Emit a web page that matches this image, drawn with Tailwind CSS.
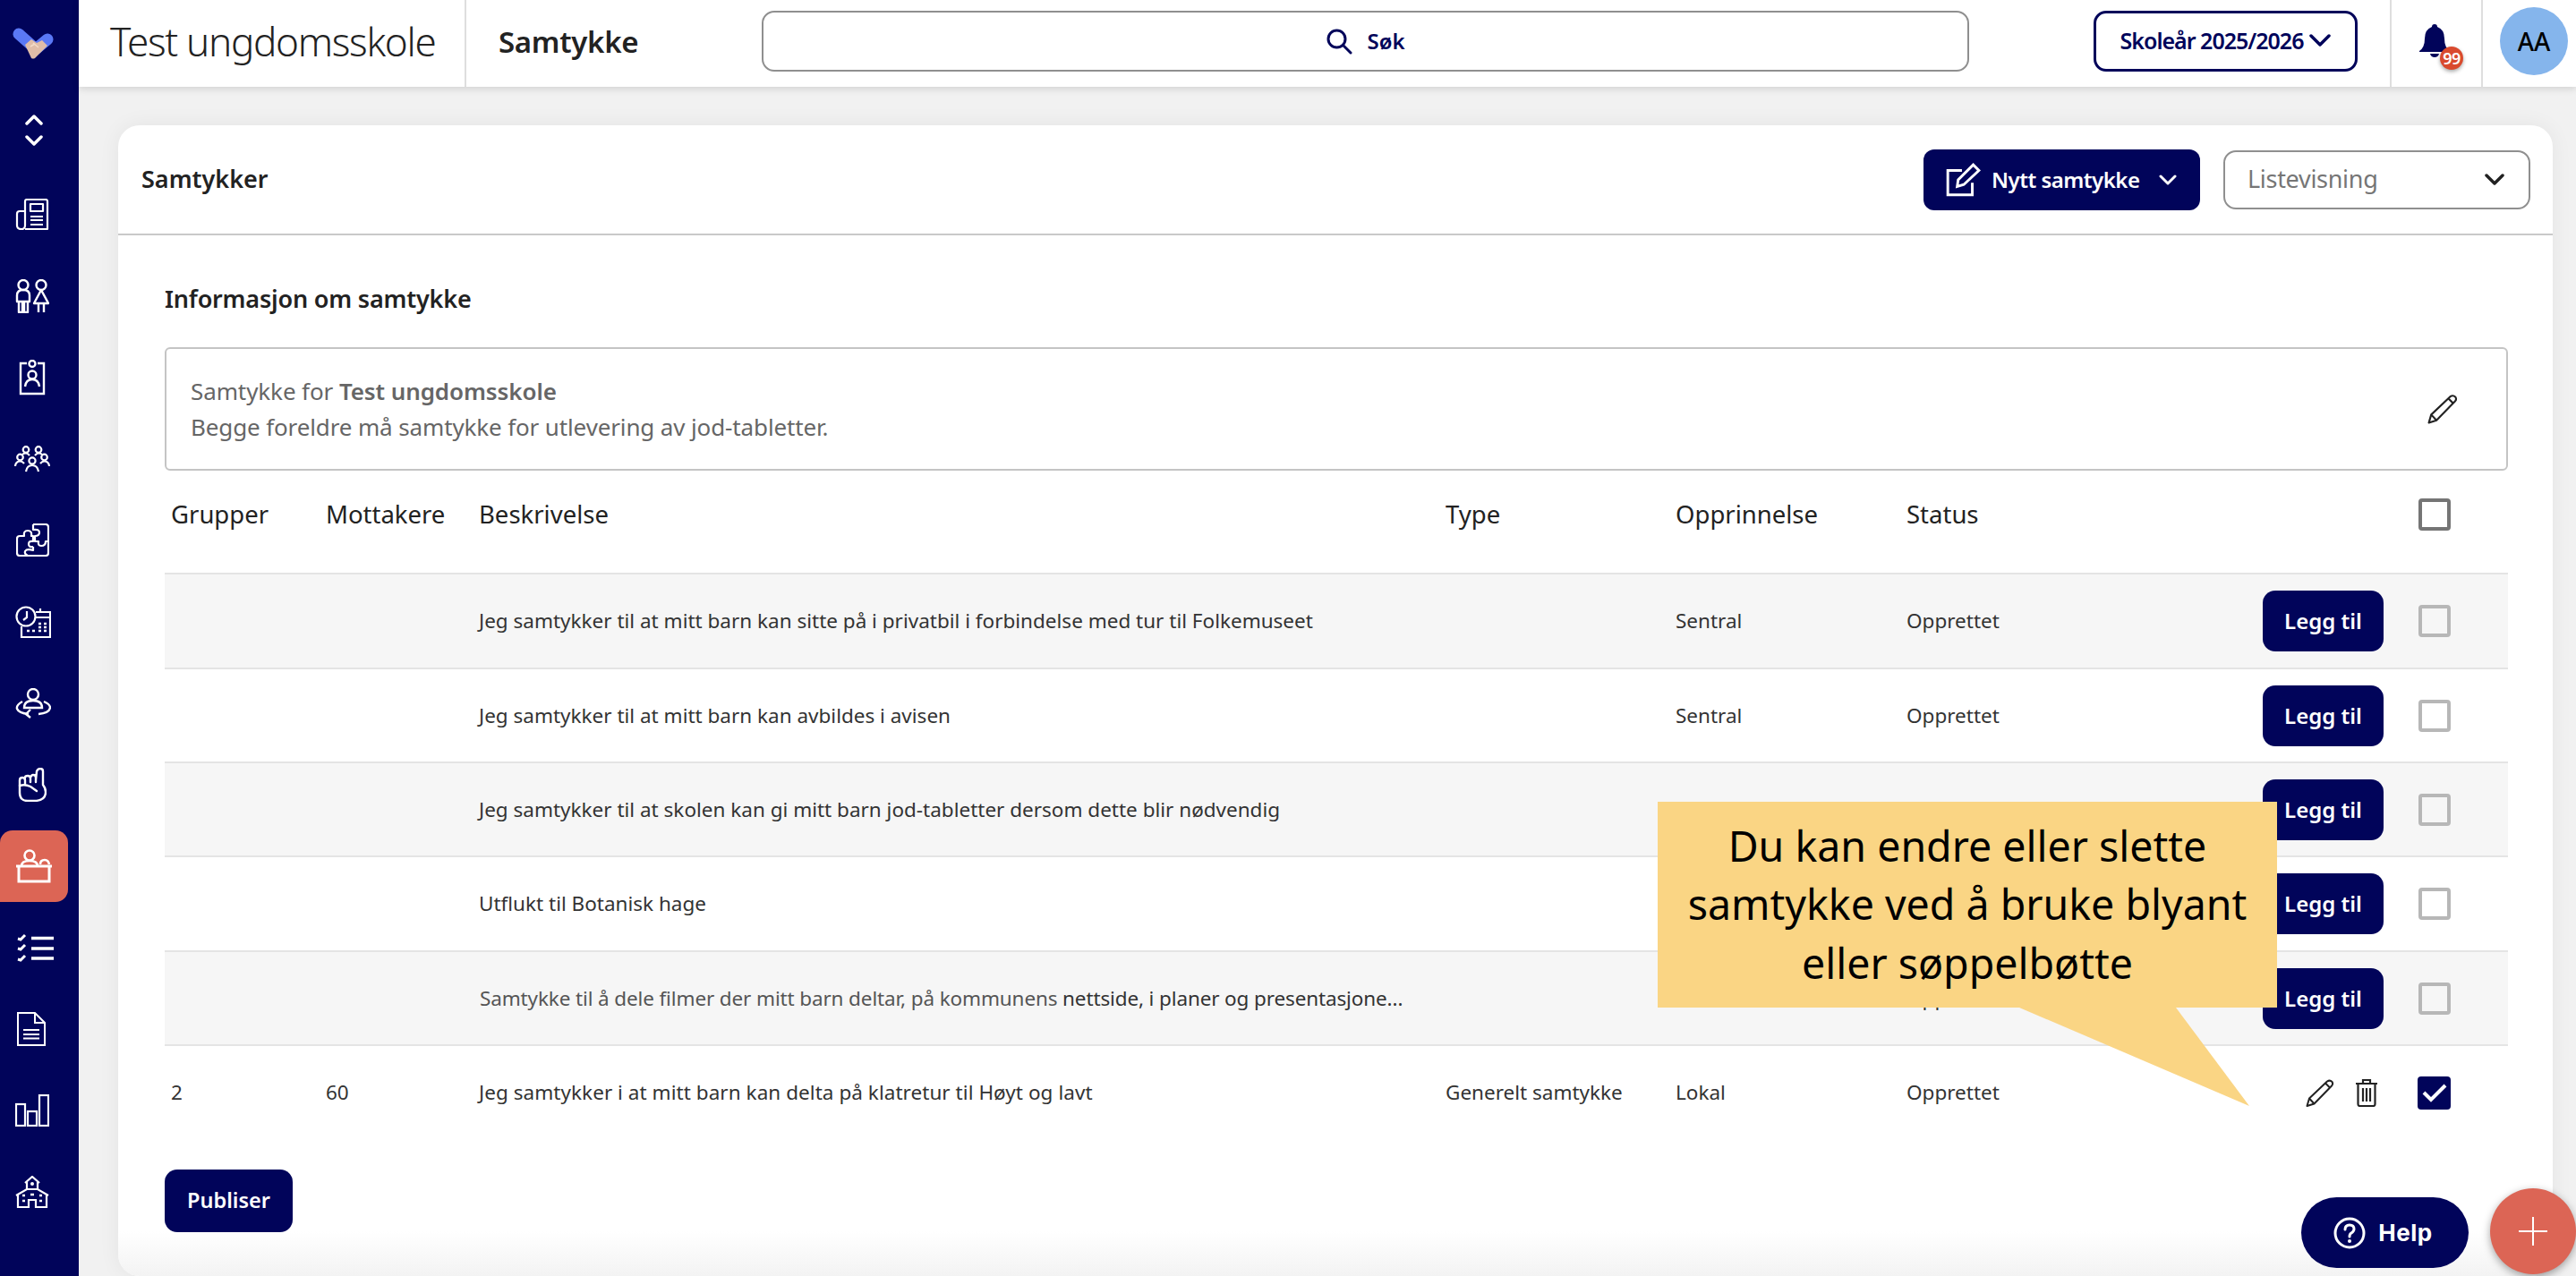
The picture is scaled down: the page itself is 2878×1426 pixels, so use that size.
<!DOCTYPE html>
<html lang="en">
<head>
  <meta charset="UTF-8">
  <title>Samtykke</title>
  <script src="https://cdn.jsdelivr.net/npm/@tailwindcss/browser@4"></script>
</head>
<body class="bg-[#f1f1f1] font-['Noto_Sans',sans-serif] text-[#222]">
<div class="relative flex h-[1426px] w-[2878px] overflow-hidden">

  <!-- Sidebar -->
  <aside class="w-[88px] shrink-0 bg-[#01045a] flex flex-col text-white">
    <div class="h-[97px] flex items-center pl-[14px]">
      <svg width="46" height="36" viewBox="0 0 46 36">
        <path d="M7 7 L25 23" stroke="#5a78f5" stroke-width="13" stroke-linecap="round"/>
        <path d="M39 13 L27 23" stroke="#5a78f5" stroke-width="13" stroke-linecap="round"/>
        <path d="M14 19 L21 13 L27 17 L33 14 L39 20 L25 34 Q23 35 21 34 Z" fill="#e0bda8"/>
        <path d="M23 17 L29 22 M20 21 L25 18" stroke="#f3dcc8" stroke-width="1.5" fill="none"/>
      </svg>
    </div>
    <div class="h-[97px] flex flex-col items-center justify-center gap-[11px] pr-[12px]">
      <svg width="20" height="13" viewBox="0 0 20 13" fill="none" stroke="#fff" stroke-width="3.5" stroke-linecap="round" stroke-linejoin="round"><path d="M2 11 L10 3 L18 11"/></svg>
      <svg width="20" height="13" viewBox="0 0 20 13" fill="none" stroke="#fff" stroke-width="3.5" stroke-linecap="round" stroke-linejoin="round"><path d="M2 2 L10 10 L18 2"/></svg>
    </div>
    <!-- news -->
    <div class="h-[91px] flex items-center justify-center pr-[16px]">
      <svg width="38" height="36" viewBox="0 0 38 36" fill="none" stroke="#fff" stroke-width="2.2" stroke-linejoin="round"><path d="M11 34 H36 V3 Q36 1 34 1 H13 Q11 1 11 3 V30 Q11 34 7 34 Q2 34 2 30 V17 Q2 14 5 14 H11"/><rect x="17" y="6" width="14" height="8"/><path d="M17 20 H31 M17 24 H31 M17 29 H31"/></svg>
    </div>
    <!-- people -->
    <div class="h-[91px] flex items-center justify-center pr-[16px]">
      <svg width="38" height="38" viewBox="0 0 38 38" fill="none" stroke="#fff" stroke-width="2.4" stroke-linejoin="round"><circle cx="9" cy="6.5" r="5.500"/><circle cx="29" cy="6.5" r="5.500"/><path d="M2 25 V18 Q2 12 9 12 Q16 12 16 18 V25 Z M4 25 V37 H8 V25 M10 25 V37 H14 V25"/><path d="M29 12 L37 27 H21 Z M26 27 V37 M32 27 V37"/></svg>
    </div>
    <!-- clipboard -->
    <div class="h-[91px] flex items-center justify-center pr-[16px]">
      <svg width="30" height="40" viewBox="0 0 30 40" fill="none" stroke="#fff" stroke-width="2.4"><path d="M9 4 H2 V38 H28 V4 H21"/><circle cx="15" cy="4.5" r="3.5"/><circle cx="15" cy="17" r="4.5"/><path d="M7 30 Q8 22 15 22 Q22 22 23 30"/></svg>
    </div>
    <!-- group -->
    <div class="h-[91px] flex items-center justify-center pr-[16px]">
      <svg width="40" height="30" viewBox="0 0 40 30" fill="none" stroke="#fff" stroke-width="2.2"><circle cx="13" cy="4.5" r="3.3"/><circle cx="27" cy="4.5" r="3.3"/><circle cx="6.5" cy="13" r="3.3"/><circle cx="33.5" cy="13" r="3.3"/><circle cx="20" cy="17" r="3.6"/><path d="M1 23 Q1.500 17.500 6.500 17.500 Q9 17.500 11 20 M39 23 Q38.500 17.500 33.500 17.500 Q31 17.500 29 20 M13 29 Q14 22 20 22 Q26 22 27 29 M9 10 Q10 8.500 13 8.500 Q15 8.500 17 11 M31 10 Q30 8.500 27 8.500 Q25 8.500 23 11"/></svg>
    </div>
    <!-- puzzle -->
    <div class="h-[91px] flex items-center justify-center pr-[16px]">
      <svg width="37" height="37" viewBox="0 0 37 37" fill="none" stroke="#fff" stroke-width="2.2" stroke-linejoin="round"><path d="M19 1 H33 Q36 1 36 4 V33 Q36 36 33 36 H4 Q1 36 1 33 V17 Q1 14 4 14 H9 Q8 8 13 8 Q18 8 17 14 H19 V20 Q14 19 14 23 Q14 27 19 26"/><path d="M19 1 V7 Q26 6 26 10 Q26 14 21 14 V20 H25 Q24 25 28 25 Q33 25 33 20 H36"/><path d="M19 26 V30 Q12 28 10 31 Q9 34 13 36"/></svg>
    </div>
    <!-- calendar clock -->
    <div class="h-[91px] flex items-center justify-center pr-[14px]">
      <svg width="40" height="36" viewBox="0 0 40 36" fill="none" stroke="#fff" stroke-width="2.2"><circle cx="12" cy="12" r="10.500"/><path d="M13 6 V13 L9 16"/><path d="M23 7 H39 V35 H7 V23"/><path d="M28 3 V8"/><path d="M22 13 H39" stroke-width="2"/><path d="M26 20 h3 M32 20 h3 M13 28 h3 M19 28 h3 M26 28 h3 M32 28 h3 M26 24 h3 M32 24 h3" stroke-width="2.400"/></svg>
    </div>
    <!-- person rotate -->
    <div class="h-[91px] flex items-center justify-center pr-[14px]">
      <svg width="40" height="34" viewBox="0 0 40 34" fill="none" stroke="#fff" stroke-width="2.4"><circle cx="20" cy="7" r="6"/><path d="M10 22 Q10 14 20 14 Q30 14 30 22 Z"/><path d="M8 15 Q1 19 2 23 Q4 28 15 29 M26 29 Q38 28 39 22 Q39 18 32 15"/><path d="M17 24 L12 29 L17 33" stroke-linejoin="round"/></svg>
    </div>
    <!-- hand -->
    <div class="h-[91px] flex items-center justify-center pr-[16px]">
      <svg width="32" height="38" viewBox="0 0 32 38" fill="none" stroke="#fff" stroke-width="2.4" stroke-linecap="round" stroke-linejoin="round"><path d="M20 14 L21 4 Q22 1 25 1 Q28 1 28 4 V19 Q31 23 31 27 Q31 37 18 37 H11 Q2 37 2 28 V14 Q2 11 5 11 Q8 11 8 14 V18 M8 11 Q8 9 11 9 Q14 9 14 12 V16 M14 11 Q15 8 17 8 Q20 8 20 11 V16"/><path d="M2 20 Q8 18 14 21 L21 26"/></svg>
    </div>
    <!-- active item -->
    <div class="h-[91px] flex items-center">
      <div class="h-[80px] w-[76px] bg-[#dc6555] rounded-r-[14px] rounded-tl-[14px] flex items-center justify-center">
        <svg width="40" height="38" viewBox="0 0 40 38" fill="none" stroke="#fff" stroke-width="2.600"><circle cx="15" cy="7" r="5.500"/><path d="M6 19 Q6 13 15 13 Q24 13 24 19"/><path d="M27 17 Q27 12 32 12 Q36 12 37 17"/><path d="M0 19 H40 M3 19 V36 H37 V19" stroke-width="3"/></svg>
      </div>
    </div>
    <!-- list -->
    <div class="h-[91px] flex items-center justify-center pr-[8px]">
      <svg width="42" height="32" viewBox="0 0 42 32" fill="none" stroke="#fff" stroke-width="3.600"><path d="M16 5.500 H41 M16 17 H41 M16 28 H41"/><path d="M1 6 L4 7 L9 2 M1 17 L4 18 L9 13 M1 29 L4 30 L9 25" stroke-width="3"/></svg>
    </div>
    <!-- document -->
    <div class="h-[91px] flex items-center justify-center pr-[18px]">
      <svg width="32" height="38" viewBox="0 0 32 38" fill="none" stroke="#fff" stroke-width="2"><path d="M1 1 H20 L31 12 V37 H1 Z M20 1 V12 H31"/><path d="M7 20 H25 M7 25 H25 M7 29.500 H25" stroke-width="2.200"/></svg>
    </div>
    <!-- bars -->
    <div class="h-[91px] flex items-center justify-center pr-[16px]">
      <svg width="38" height="36" viewBox="0 0 38 36" fill="none" stroke="#fff" stroke-width="2.200"><rect x="1" y="11" width="10" height="24"/><rect x="14" y="19" width="10" height="16"/><rect x="27" y="1" width="10" height="34"/></svg>
    </div>
    <!-- school -->
    <div class="h-[91px] flex items-center justify-center pr-[16px]">
      <svg width="38" height="36" viewBox="0 0 38 36" fill="none" stroke="#fff" stroke-width="2.200"><path d="M11 8 L19 1 L27 8 M13 7 V15 M25 7 V15"/><path d="M1 22 L13 15 H25 L37 22"/><path d="M3 21 V35 H15 V27 H23 V35 H35 V21"/><circle cx="19" cy="9" r="2" fill="#fff" stroke="none"/><path d="M8 22 h3 M8 28 h3 M17 21 h4 M27 22 h3 M27 28 h3" stroke-width="2.600"/></svg>
    </div>
  </aside>

  <div class="flex-1 flex flex-col min-w-0">
    <!-- Header -->
    <header class="relative z-10 h-[97px] shrink-0 bg-white shadow-[0_2px_8px_rgba(0,0,0,0.14)] flex items-center">
      <div class="w-[433px] h-full flex items-center pl-[35px] pb-[5px] border-r-2 border-[#dedede]">
        <h1 class="text-[44px] font-light text-[#222] whitespace-nowrap tracking-[-1.3px]">Test ungdomsskole</h1>
      </div>
      <div class="w-[330px] pl-[36px] pb-[4px]">
        <span class="text-[33px] font-semibold whitespace-nowrap tracking-[-0.3px]">Samtykke</span>
      </div>
      <div class="w-[1349px] h-[68px] mb-[6px] border-2 border-[#8f8f8f] rounded-[14px] flex items-center justify-center gap-[16px] text-[#01045a]">
        <svg width="30" height="30" viewBox="0 0 30 30" fill="none" stroke="#01045a" stroke-width="3" stroke-linecap="round"><circle cx="12.500" cy="12.500" r="9.500"/><path d="M20 20 L28 28"/></svg>
        <span class="text-[24px] font-semibold">Søk</span>
      </div>
      <div class="ml-auto mr-[36px] w-[295px] h-[68px] mb-[6px] border-[3px] border-[#01045a] rounded-[14px] flex items-center justify-center gap-[7px] text-[#01045a]">
        <span class="text-[25px] font-semibold whitespace-nowrap tracking-[-1px]">Skoleår 2025/2026</span>
        <svg width="24" height="15" viewBox="0 0 24 15" fill="none" stroke="#01045a" stroke-width="3.500" stroke-linecap="round" stroke-linejoin="round"><path d="M2 2 L12 12 L22 2"/></svg>
      </div>
      <div class="relative w-[102px] h-full pb-[6px] border-l-2 border-[#dedede] flex items-center justify-center pr-[4px]">
        <svg width="34" height="38" viewBox="0 0 34 38" fill="#01045a"><path d="M17 0 Q20 0 20 3 Q28 6 28 16 Q28 26 34 30 V31 H0 V30 Q6 26 6 16 Q6 6 14 3 Q14 0 17 0 Z"/><path d="M12 33 H22 Q21 37 17 37 Q13 37 12 33 Z"/></svg>
        <span class="absolute left-[54px] top-[52px] w-[26px] h-[26px] rounded-full bg-[#d94a2e] text-white text-[18px] font-semibold flex items-center justify-center shadow-[0_2px_4px_rgba(0,0,0,0.35)] tracking-[-0.5px]">99</span>
      </div>
      <div class="w-[106px] h-full pb-[6px] border-l-2 border-[#dedede] flex items-center justify-center pl-[16px] pr-[6px]">
        <div class="w-[76px] h-[76px] shrink-0 rounded-full bg-[#85b5ec] flex items-center justify-center text-[28px] font-medium text-black">AA</div>
      </div>
    </header>

    <!-- Content -->
    <main class="flex-1 min-h-0 pt-[43px] pl-[44px] pr-[26px]">
      <section class="relative h-full bg-white rounded-[24px] shadow-[0_0_24px_rgba(0,0,0,0.06)] overflow-hidden">
        <div class="h-[123px] border-b-2 border-[#c9c9c9] flex items-center pl-[26px] pr-[25px]">
          <h2 class="text-[27px] font-semibold">Samtykker</h2>
          <button class="ml-auto w-[309px] h-[68px] bg-[#01045a] text-white rounded-[12px] flex items-center pl-[24px] gap-[12px]">
            <svg width="40" height="40" viewBox="0 0 38 38" fill="none" stroke="#fff" stroke-width="2.800"><path d="M29 22 V35 H3 V9 H18"/><path d="M13 26 L14 19 L30 3 L36 9 L20 24 Z"/></svg>
            <span class="text-[24px] font-semibold whitespace-nowrap tracking-[-0.5px]">Nytt samtykke</span>
            <svg class="ml-[10px]" width="20" height="12" viewBox="0 0 20 12" fill="none" stroke="#fff" stroke-width="3" stroke-linecap="round" stroke-linejoin="round"><path d="M2 2 L10 10 L18 2"/></svg>
          </button>
          <div class="ml-[26px] w-[343px] h-[66px] border-2 border-[#8f8f8f] rounded-[14px] flex items-center justify-between pl-[25px] pr-[27px]">
            <span class="text-[27px] text-[#767676] tracking-[-0.3px]">Listevisning</span>
            <svg width="22" height="14" viewBox="0 0 22 14" fill="none" stroke="#222" stroke-width="3.500" stroke-linecap="round" stroke-linejoin="round"><path d="M2 2 L11 11 L20 2"/></svg>
          </div>
        </div>

        <div class="pl-[52px] pr-[50px]">
          <h3 class="h-[125px] flex items-center text-[27px] font-semibold pt-[18px] tracking-[-0.2px]">Informasjon om samtykke</h3>
          <div class="h-[138px] border-2 border-[#c4c4c4] rounded-[6px] flex items-center justify-between pl-[27px] pr-[54px] text-[26px] leading-[40px] text-[#666]">
            <div>
              <p class="tracking-[-0.1px]">Samtykke for <b class="font-semibold">Test ungdomsskole</b></p>
              <p class="tracking-[-0.13px]">Begge foreldre må samtykke for utlevering av jod-tabletter.</p>
            </div>
            <svg width="34" height="34" viewBox="0 0 32 32" fill="none" stroke="#222" stroke-width="2" stroke-linejoin="round"><path d="M1.500 30.500 L4 22 L24 3 Q27 1 29.500 3.500 Q31 6 29 8 L9.500 28 Z M4 22 L9.500 28 M22 5 L27 10"/></svg>
          </div>

          <!-- Table -->
          <div class="h-[114px] pb-[16px] grid grid-cols-[173px_171px_1080px_257px_258px_1fr] items-center pl-[7px] pr-[64px] text-[27.500px]">
            <span>Grupper</span><span>Mottakere</span><span>Beskrivelse</span><span>Type</span><span>Opprinnelse</span>
            <div class="flex items-center justify-between"><span>Status</span><span class="block w-[36px] h-[36px] border-[4px] border-[#757575] rounded-[4px]"></span></div>
          </div>

          <div class="h-[108px] bg-[#f6f6f6] border-y-2 border-[#e4e4e4] grid grid-cols-[173px_171px_1080px_257px_258px_1fr] items-center pl-[7px] pr-[64px] text-[22.500px] text-[#333]">
            <span></span><span></span><span>Jeg samtykker til at mitt barn kan sitte på i privatbil i forbindelse med tur til Folkemuseet</span><span></span><span>Sentral</span>
            <div class="flex items-center"><span>Opprettet</span><button class="ml-auto w-[135px] h-[68px] rounded-[14px] bg-[#01045a] text-white text-[24px] font-semibold">Legg til</button><span class="ml-[39px] w-[36px] h-[36px] border-[4px] border-[#b7b7b7] rounded-[4px]"></span></div>
          </div>
          <div class="h-[105px] bg-white border-b-2 border-[#e4e4e4] grid grid-cols-[173px_171px_1080px_257px_258px_1fr] items-center pl-[7px] pr-[64px] text-[22.500px] text-[#333]">
            <span></span><span></span><span>Jeg samtykker til at mitt barn kan avbildes i avisen</span><span></span><span>Sentral</span>
            <div class="flex items-center"><span>Opprettet</span><button class="ml-auto w-[135px] h-[68px] rounded-[14px] bg-[#01045a] text-white text-[24px] font-semibold">Legg til</button><span class="ml-[39px] w-[36px] h-[36px] border-[4px] border-[#b7b7b7] rounded-[4px]"></span></div>
          </div>
          <div class="h-[105px] bg-[#f6f6f6] border-b-2 border-[#e4e4e4] grid grid-cols-[173px_171px_1080px_257px_258px_1fr] items-center pl-[7px] pr-[64px] text-[22.500px] text-[#333]">
            <span></span><span></span><span>Jeg samtykker til at skolen kan gi mitt barn jod-tabletter dersom dette blir nødvendig</span><span></span><span>Sentral</span>
            <div class="flex items-center"><span>Opprettet</span><button class="ml-auto w-[135px] h-[68px] rounded-[14px] bg-[#01045a] text-white text-[24px] font-semibold">Legg til</button><span class="ml-[39px] w-[36px] h-[36px] border-[4px] border-[#b7b7b7] rounded-[4px]"></span></div>
          </div>
          <div class="h-[106px] bg-white border-b-2 border-[#e4e4e4] grid grid-cols-[173px_171px_1080px_257px_258px_1fr] items-center pl-[7px] pr-[64px] text-[22.500px] text-[#333]">
            <span></span><span></span><span>Utflukt til Botanisk hage</span><span></span><span>Sentral</span>
            <div class="flex items-center"><span>Opprettet</span><button class="ml-auto w-[135px] h-[68px] rounded-[14px] bg-[#01045a] text-white text-[24px] font-semibold">Legg til</button><span class="ml-[39px] w-[36px] h-[36px] border-[4px] border-[#b7b7b7] rounded-[4px]"></span></div>
          </div>
          <div class="h-[105px] bg-[#f6f6f6] border-b-2 border-[#e4e4e4] grid grid-cols-[173px_171px_1080px_257px_258px_1fr] items-center pl-[7px] pr-[64px] text-[22.500px] text-[#333]">
            <span></span><span></span><span class="whitespace-nowrap pl-[1px] tracking-[-0.13px]"><span class="text-[#555]">Samtykke til å dele filmer der mitt barn deltar, på kommunens</span> nettside, i planer og presentasjone...</span><span></span><span>Sentral</span>
            <div class="flex items-center"><span>Opprettet</span><button class="ml-auto w-[135px] h-[68px] rounded-[14px] bg-[#01045a] text-white text-[24px] font-semibold">Legg til</button><span class="ml-[39px] w-[36px] h-[36px] border-[4px] border-[#b7b7b7] rounded-[4px]"></span></div>
          </div>
          <div class="h-[104px] bg-white grid grid-cols-[173px_171px_1080px_257px_258px_1fr] items-center pl-[7px] pr-[64px] text-[22.500px] text-[#333]">
            <span>2</span><span>60</span><span class="tracking-[0.05px]">Jeg samtykker i at mitt barn kan delta på klatretur til Høyt og lavt</span><span>Generelt samtykke</span><span>Lokal</span>
            <div class="flex items-center"><span>Opprettet</span>
              <svg class="ml-auto" width="32" height="33" viewBox="0 0 32 32" fill="none" stroke="#222" stroke-width="2" stroke-linejoin="round"><path d="M1.500 30.500 L4 22 L24 3 Q27 1 29.500 3.500 Q31 6 29 8 L9.500 28 Z M4 22 L9.500 28 M22 5 L27 10"/></svg>
              <svg class="ml-[23px]" width="26" height="32" viewBox="0 0 26 32" fill="none" stroke="#222" stroke-width="2.200"><path d="M1 6 H25 M9 6 V2 H17 V6 M3.500 6 V29 Q3.500 31 5.500 31 H20.500 Q22.500 31 22.500 29 V6"/><path d="M9 11 V26 M13 11 V26 M17 11 V26"/></svg>
              <span class="ml-[44px] w-[37px] h-[37px] bg-[#01045a] rounded-[4px] flex items-center justify-center">
                <svg width="28" height="22" viewBox="0 0 28 22" fill="none" stroke="#fff" stroke-width="4"><path d="M2 11 L10 19 L26 3"/></svg>
              </span>
            </div>
          </div>

          <button class="mt-[34px] w-[143px] h-[70px] rounded-[14px] bg-[#01045a] text-white text-[23.500px] font-semibold">Publiser</button>
        </div>
        <div class="absolute left-0 right-0 bottom-0 h-[50px] bg-linear-to-b from-white/0 to-[#f3f3f3]"></div>
      </section>
    </main>
  </div>

  <!-- Callout over the table -->
  <div class="absolute left-[1852px] top-[896px] w-[692px] h-[230px] bg-[#fad584] flex items-center justify-center text-center text-black text-[46.500px] leading-[65.500px]">
    <p>Du kan endre eller slette<br>samtykke ved å bruke blyant<br>eller søppelbøtte</p>
  </div>
  <svg class="absolute left-[2256px] top-[1126px]" width="257" height="110" viewBox="0 0 257 110"><polygon points="0,0 175,0 257,110" fill="#fad584"/></svg>

  <!-- Floating buttons -->
  <button class="absolute left-[2571px] top-[1338px] w-[187px] h-[79px] rounded-full bg-[#01045a] text-white flex items-center justify-center gap-[14px] pr-[4px]">
    <svg width="36" height="36" viewBox="0 0 36 36" fill="none" stroke="#fff" stroke-width="3"><circle cx="18" cy="18" r="16"/><path d="M13 14 Q13 9 18 9 Q23 9 23 13.500 Q23 16 20 18 Q18 19 18 22" stroke-linecap="round"/><circle cx="18" cy="27" r="2" fill="#fff" stroke="none"/></svg>
    <span class="font-['Inter',sans-serif] text-[26px] font-bold tracking-[0.5px]">Help</span>
  </button>
  <button class="absolute left-[2782px] top-[1328px] w-[96px] h-[96px] rounded-full bg-[#dc6555] shadow-[0_3px_10px_rgba(0,0,0,0.35)] flex items-center justify-center">
    <svg width="32" height="32" viewBox="0 0 32 32" stroke="#fff" stroke-width="2"><path d="M16 0 V32 M0 16 H32"/></svg>
  </button>
</div>
</body>
</html>
